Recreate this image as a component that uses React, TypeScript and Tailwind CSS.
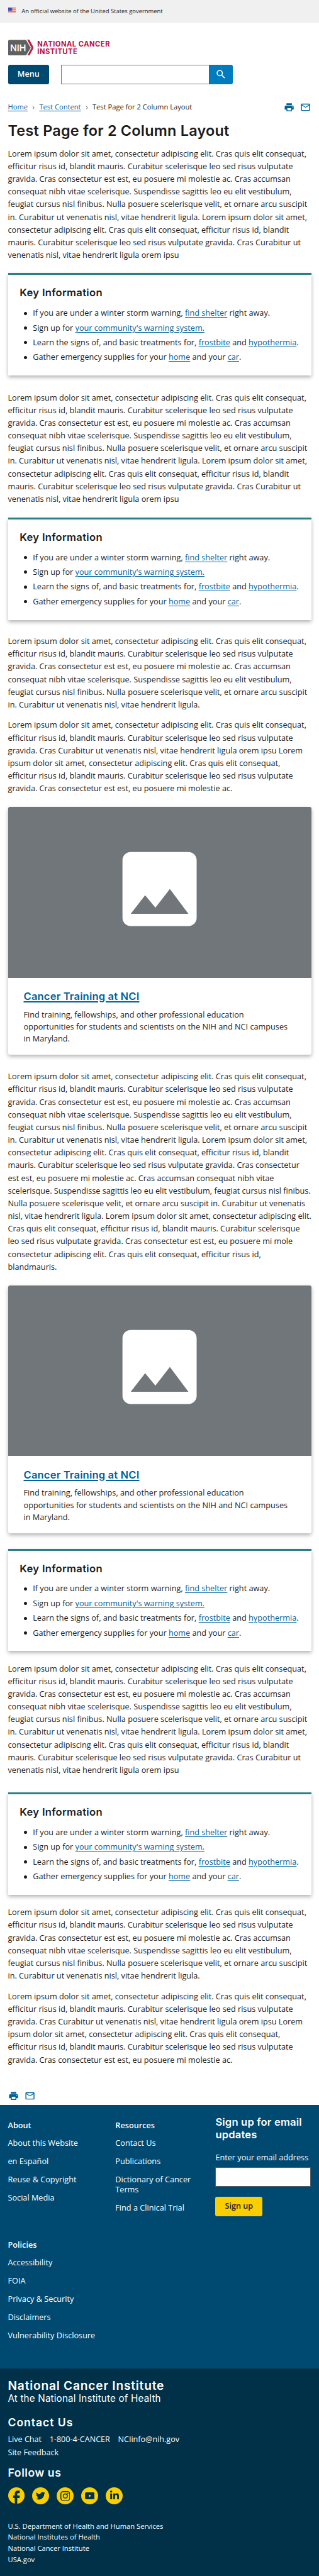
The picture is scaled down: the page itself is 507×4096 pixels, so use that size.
import type { ReactNode } from "react";
import {
  MdFacebook,
  MdImage,
  MdMailOutline,
  MdNavigateNext,
  MdPrint,
  MdSearch,
} from "react-icons/md";
import { FaLinkedinIn, FaTwitter } from "react-icons/fa";

const LEAD = `Lorem ipsum dolor sit amet, consectetur adipiscing elit. Cras quis elit consequat,
efficitur risus id, blandit mauris. Curabitur scelerisque leo sed risus vulputate
gravida. Cras consectetur est est, eu posuere mi molestie ac. Cras accumsan
consequat nibh vitae scelerisque. Suspendisse sagittis leo eu elit vestibulum,
feugiat cursus nisl finibus. Nulla posuere scelerisque velit, et ornare arcu suscipit
in. Curabitur ut venenatis nisl, vitae hendrerit ligula.`;

const MEDIUM = `${LEAD} Lorem ipsum dolor sit amet,
consectetur adipiscing elit. Cras quis elit consequat, efficitur risus id, blandit
mauris. Curabitur scelerisque leo sed risus vulputate gravida. Cras Curabitur ut
venenatis nisl, vitae hendrerit ligula orem ipsu`;

const LONG = `${LEAD} Lorem ipsum dolor sit amet,
consectetur adipiscing elit. Cras quis elit consequat, efficitur risus id, blandit
mauris. Curabitur scelerisque leo sed risus vulputate gravida. Cras consectetur
est est, eu posuere mi molestie ac. Cras accumsan consequat nibh vitae
scelerisque. Suspendisse sagittis leo eu elit vestibulum, feugiat cursus nisl finibus.
Nulla posuere scelerisque velit, et ornare arcu suscipit in. Curabitur ut venenatis
nisl, vitae hendrerit ligula. Lorem ipsum dolor sit amet, consectetur adipiscing elit.
Cras quis elit consequat, efficitur risus id, blandit mauris. Curabitur scelerisque
leo sed risus vulputate gravida. Cras consectetur est est, eu posuere mi mole
consectetur adipiscing elit. Cras quis elit consequat, efficitur risus id,
blandmauris.`;

const SECOND = `Lorem ipsum dolor sit amet, consectetur adipiscing elit. Cras quis elit consequat,
efficitur risus id, blandit mauris. Curabitur scelerisque leo sed risus vulputate
gravida. Cras Curabitur ut venenatis nisl, vitae hendrerit ligula orem ipsu Lorem
ipsum dolor sit amet, consectetur adipiscing elit. Cras quis elit consequat,
efficitur risus id, blandit mauris. Curabitur scelerisque leo sed risus vulputate
gravida. Cras consectetur est est, eu posuere mi molestie ac.`;

function Link({ children }: { children: ReactNode }) {
  return (
    <a href="#" className="text-[#00629b] underline underline-offset-[1.5px] decoration-[1px]">
      {children}
    </a>
  );
}

function Para({ text, className }: { text: string; className: string }) {
  return (
    <p className={`whitespace-pre text-[12.7px] leading-[20.17px] ${className}`}>{text}</p>
  );
}

function Bullet({ children }: { children: ReactNode }) {
  return (
    <li className="flex items-center gap-[9.2px] whitespace-nowrap">
      <span className="mt-[1.5px] size-[5px] shrink-0 rounded-full bg-[#1b1b1b]" />
      <span>{children}</span>
    </li>
  );
}

function KeyInfo({ className }: { className: string }) {
  return (
    <section
      className={`h-[162.8px] border-t-[3px] border-[#298085] bg-white pt-[18px] shadow-[0_3px_6px_rgba(0,0,0,0.3)] ${className}`}
    >
      <h2 className="pl-[18.7px] font-['Inter',sans-serif] text-[16.6px] leading-5 font-semibold tracking-[0.31px]">
        Key Information
      </h2>
      <ul className="mt-[11.9px] flex flex-col gap-[3.2px] pl-[25.5px] text-[12.7px] leading-[20.17px]">
        <Bullet>
          If you are under a winter storm warning, <Link>find shelter</Link> right away.
        </Bullet>
        <Bullet>
          Sign up for <Link>your community's warning system.</Link>
        </Bullet>
        <Bullet>
          Learn the signs of, and basic treatments for, <Link>frostbite</Link> and{" "}
          <Link>hypothermia</Link>.
        </Bullet>
        <Bullet>
          Gather emergency supplies for your <Link>home</Link> and your <Link>car</Link>.
        </Bullet>
      </ul>
    </section>
  );
}

function PromoCard({ className }: { className: string }) {
  return (
    <article
      className={`h-[393.9px] overflow-hidden rounded-[3px] bg-white shadow-[0_3px_6px_rgba(0,0,0,0.3)] ${className}`}
    >
      <div className="flex h-[271.4px] justify-center bg-[#71767a] pt-[51.4px] text-white">
        <MdImage className="size-[157.2px]" />
      </div>
      <h2 className="mt-[19.3px] pl-[25px] font-['Inter',sans-serif] text-[16.6px] leading-5 font-semibold tracking-[0.15px] text-[#00629b] underline decoration-[1.6px] underline-offset-[2px]">
        Cancer Training at NCI
      </h2>
      <p className="mt-[9.8px] pl-[25px] text-[12.7px] leading-[19.2px] whitespace-pre">
        {`Find training, fellowships, and other professional education
opportunities for students and scientists on the NIH and NCI campuses
in Maryland.`}
      </p>
    </article>
  );
}

function ShareIcons() {
  return (
    <div className="flex gap-[9.3px] text-[#00629b]">
      <MdPrint className="size-[17.2px]" />
      <MdMailOutline className="size-[17.2px]" />
    </div>
  );
}

function Flag() {
  return (
    <svg viewBox="0 0 16 11" className="h-[8.6px] w-[12.5px]">
      <rect width="16" height="11" fill="#fff" />
      {[0, 2, 4, 6, 8, 10].map((y) => (
        <rect key={y} y={y} width="16" height="1" fill="#db3e1f" />
      ))}
      <rect width="8" height="6.5" fill="#1e33b1" />
      {[1.2, 3.2, 5.2].map((y) =>
        [1.2, 3.2, 5.2, 7].map((x) => (
          <circle key={`${x}-${y}`} cx={x} cy={y} r="0.5" fill="#fff" />
        )),
      )}
    </svg>
  );
}

function Logo() {
  return (
    <div className="flex h-[25.8px] items-center">
      <svg viewBox="0 0 52 33" className="h-[25.8px] w-[40.6px]">
        <path d="M2.5 0.7H36.3L46 16.5L36.3 32.3H2.5Q0 32.3 0 30V3Q0 0.7 2.5 0.7Z" fill="#606060" />
        <path d="M38.5 0H43L52 16.5L43 33H38.5L47.5 16.5Z" fill="#ba1f40" />
        <text
          x="4.2"
          y="23.3"
          fontFamily="Liberation Sans, sans-serif"
          fontSize="18.6"
          fontWeight="400"
          stroke="#fff"
          strokeWidth="0.6"
          textLength="32"
          fill="#fff"
        >
          NIH
        </text>
      </svg>
      <div className="ml-[6.2px] font-['Inter',sans-serif] text-[11.2px] leading-[12px] font-bold tracking-[0.5px] whitespace-nowrap text-[#bb0e3d]">
        NATIONAL CANCER
        <br />
        INSTITUTE
      </div>
    </div>
  );
}

function FooterList({
  title,
  links,
  className,
}: {
  title: string;
  links: string[];
  className: string;
}) {
  return (
    <div className={`text-[12.7px] leading-[16.5px] whitespace-pre ${className}`}>
      <h3 className="font-semibold">{title}</h3>
      <ul className="mt-[11.7px] flex flex-col gap-[12.4px]">
        {links.map((link) => (
          <li key={link}>{link}</li>
        ))}
      </ul>
    </div>
  );
}

function Badge({ children }: { children: ReactNode }) {
  return (
    <span className="flex size-[26.2px] items-center justify-center rounded-full bg-[#face00] text-[#003149]">
      {children}
    </span>
  );
}

export default function App() {
  return (
    <div className="flex h-[4096px] w-[507px] flex-col overflow-hidden bg-white font-['Open_Sans',sans-serif] text-[#1b1b1b]">
      <div className="flex h-[35.9px] shrink-0 items-center gap-[9.3px] bg-[#f0f0f0] pl-[12.5px] text-[9.42px]">
        <div className="-mt-[2.5px]">
          <Flag />
        </div>
        <span>An official website of the United States government</span>
      </div>

      <header className="h-[112px] shrink-0 pt-[26.8px] pl-[12.5px]">
        <Logo />
        <div className="mt-[14.5px] flex h-[31.2px]">
          <button className="w-[65.5px] rounded-[3px] bg-[#004971] text-[12.6px] font-semibold text-white">
            Menu
          </button>
          <div className="ml-[18.7px] w-[235.6px] border border-r-0 border-[#71767a] bg-white" />
          <button className="flex w-[37.4px] items-center justify-center rounded-r-[3px] bg-[#007bbd] pb-[1.6px] text-white">
            <MdSearch className="size-[18.4px]" />
          </button>
        </div>
      </header>

      <main className="h-[3199.1px] shrink-0 px-[12.5px] pt-[14px]">
        <div className="flex h-[17.2px] items-center justify-between">
          <nav className="flex items-center gap-[4px] text-[11.15px]">
            <Link>Home</Link>
            <MdNavigateNext className="mt-[1px] size-[10.4px] text-[#71767a]" />
            <Link>Test Content</Link>
            <MdNavigateNext className="mt-[1px] size-[10.4px] text-[#71767a]" />
            <span>Test Page for 2 Column Layout</span>
          </nav>
          <ShareIcons />
        </div>

        <h1 className="mt-[13.7px] font-['Inter',sans-serif] text-[23.4px] leading-[30px] font-semibold tracking-[0.24px] whitespace-nowrap">
          Test Page for 2 Column Layout
        </h1>

        <Para text={MEDIUM} className="mt-[11px]" />
        <KeyInfo className="mt-[19.1px]" />
        <Para text={MEDIUM} className="mt-[24.3px]" />
        <KeyInfo className="mt-[19.7px]" />
        <Para text={LEAD} className="mt-[23.6px]" />
        <Para text={SECOND} className="mt-[12.2px]" />
        <PromoCard className="mt-[19.8px]" />
        <Para text={LONG} className="mt-[24.1px]" />
        <PromoCard className="mt-[20px]" />
        <KeyInfo className="mt-[24.8px]" />
        <Para text={MEDIUM} className="mt-[17.2px]" />
        <KeyInfo className="mt-[26.1px]" />
        <Para text={LEAD} className="mt-[17.3px]" />
        <Para text={SECOND} className="mt-[12.4px]" />
        <div className="mt-[38.8px]">
          <ShareIcons />
        </div>
      </main>

      <section className="flex h-[418.8px] shrink-0 bg-[#004971] pl-[12.5px] text-white">
        <div className="flex w-[329.9px] flex-col pt-[23.8px]">
          <div className="flex h-[147.7px]">
            <FooterList
              title="About"
              links={["About this Website", "en Español", "Reuse & Copyright", "Social Media"]}
              className="w-[170.8px]"
            />
            <FooterList
              title="Resources"
              links={[
                "Contact Us",
                "Publications",
                "Dictionary of Cancer\nTerms",
                "Find a Clinical Trial",
              ]}
              className=""
            />
          </div>
          <FooterList
            title="Policies"
            links={[
              "Accessibility",
              "FOIA",
              "Privacy & Security",
              "Disclaimers",
              "Vulnerability Disclosure",
            ]}
            className="mt-[42.4px]"
          />
        </div>
        <div className="w-[152.1px] pt-[18.3px]">
          <h2 className="font-['Inter',sans-serif] text-[16.6px] leading-[19.3px] font-semibold tracking-[0.17px] whitespace-nowrap">
            Sign up for email
            <br />
            updates
          </h2>
          <label className="mt-[18.6px] block text-[12.7px] leading-[16.5px] whitespace-nowrap">
            Enter your email address
          </label>
          <div className="mt-[7.3px] h-[30.6px] border border-[#565c65] bg-white" />
          <button className="mt-[15.8px] h-[31.4px] w-[74.9px] rounded-[3px] bg-[#face00] text-[12.6px] font-semibold whitespace-nowrap text-[#1b1b1b]">
            Sign up
          </button>
        </div>
      </section>

      <footer className="h-[330.2px] shrink-0 bg-[#003149] pt-[15.6px] pl-[12.5px] text-white">
        <h2 className="font-['Inter',sans-serif] text-[19.2px] leading-6 font-semibold tracking-[0.77px]">
          National Cancer Institute
        </h2>
        <p className="font-['Inter',sans-serif] text-[15.2px] leading-[18px] tracking-[0.18px]">
          At the National Institute of Health
        </p>
        <h3 className="mt-[18px] font-['Inter',sans-serif] text-[17.6px] leading-[22px] font-semibold tracking-[0.95px]">
          Contact Us
        </h3>
        <div className="mt-[6.1px] flex w-[300px] flex-wrap gap-x-[12.6px] text-[12.6px] leading-[20.16px]">
          <span>Live Chat</span>
          <span>1-800-4-CANCER</span>
          <span>NCIinfo@nih.gov</span>
          <span>Site Feedback</span>
        </div>
        <h3 className="mt-[11.4px] font-['Inter',sans-serif] text-[17.6px] leading-[22px] font-semibold tracking-[0.57px]">
          Follow us
        </h3>
        <div className="mt-[12.2px] flex gap-[12.8px]">
          <MdFacebook viewBox="2 2 20 20" className="size-[26.2px] text-[#face00]" />
          <Badge>
            <FaTwitter className="size-[14.8px]" />
          </Badge>
          <Badge>
            <svg viewBox="0 0 20 20" className="size-[15.6px]" fill="none" stroke="currentColor" strokeWidth="1.8">
              <rect x="1" y="1" width="18" height="18" rx="4.6" />
              <circle cx="10" cy="10" r="4.2" />
              <circle cx="15.2" cy="4.8" r="1.2" fill="currentColor" stroke="none" />
            </svg>
          </Badge>
          <Badge>
            <svg viewBox="0 0 20 14" className="h-[11px] w-[15.7px]" fill="currentColor">
              <rect width="20" height="14" rx="3" />
              <path d="M8 4L13 7L8 10Z" fill="#face00" />
            </svg>
          </Badge>
          <Badge>
            <FaLinkedinIn className="size-[16px]" />
          </Badge>
        </div>
        <ul className="mt-[26.2px] text-[11.2px] leading-[17.6px]">
          <li>U.S. Department of Health and Human Services</li>
          <li>National Institutes of Health</li>
          <li>National Cancer Institute</li>
          <li>USA.gov</li>
        </ul>
      </footer>
    </div>
  );
}
